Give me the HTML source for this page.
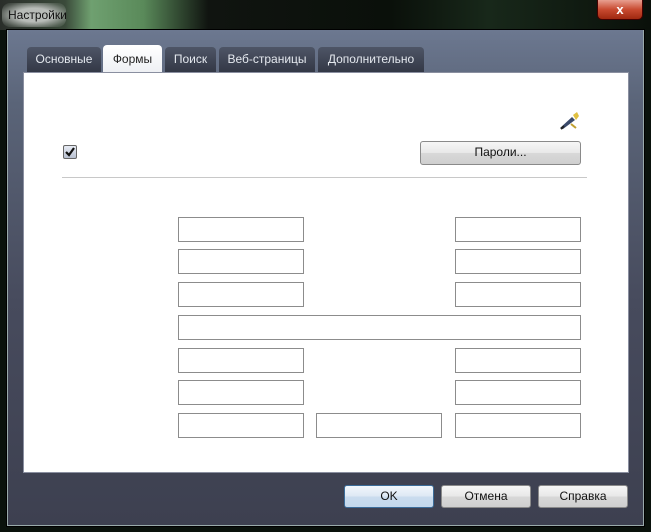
<!DOCTYPE html>
<html><head><meta charset="utf-8"><style>
*{margin:0;padding:0;box-sizing:border-box}
body{width:651px;height:532px;overflow:hidden;background:#0a120c;font-family:"Liberation Sans",sans-serif;font-size:12px;position:relative}
.a{position:absolute}
.title{left:0;top:0;width:651px;height:30px;background:linear-gradient(90deg,#2a2e2a 0,#3a4a3a 10%,#6fa070 14%,#5a8a5a 22%,#101410 32%,#0a100a 60%,#18281a 75%,#0a100a 100%)}
.frame{left:7px;top:30px;width:637px;height:496px;background:linear-gradient(#6c7890 0,#5a6478 15%,#474b5d 55%,#3d4050 100%);border:1px solid #9aa;border-top:none;box-shadow:0 0 0 1px #000}
.panel{left:23px;top:72px;width:606px;height:401px;background:#fff;border:1px solid #8a8fa0}
.tab{top:47px;height:25px;background:linear-gradient(#4e5566,#333846);color:#e4e8ee;text-align:center;line-height:25px;border-radius:4px 4px 0 0;font-size:12px}
.tab.s{background:linear-gradient(#fff,#eef0f4);color:#222;height:27px;top:45px;line-height:29px}
.f{width:126px;height:25px;border:1px solid #8c8c8c;background:#fff}
.btn{height:23px;border:1px solid #8a8a8a;border-radius:3px;background:linear-gradient(#f6f6f6 0,#e8e8e8 50%,#d8d8d8 51%,#cfcfcf 100%);text-align:center;line-height:21px;color:#111}
</style></head><body>
<div class="a title"></div>
<div class="a" style="left:2px;top:3px;width:64px;height:24px;border-radius:8px;background:radial-gradient(ellipse,#b8bcb8 40%,rgba(150,160,150,0.3) 80%,transparent)"></div>
<div class="a" style="left:8px;top:8px;color:#111;font-size:12px">Настройки</div>
<div class="a" style="left:597px;top:0;width:46px;height:20px;border:1px solid #400;border-top:none;border-radius:0 0 5px 5px;background:linear-gradient(#e8a090,#c84a30 50%,#a02810);color:#fff;text-align:center;font-weight:bold;font-size:13px;line-height:19px">x</div>
<div class="a frame"></div>
<div class="a tab" style="left:27px;width:74px">Основные</div>
<div class="a tab s" style="left:103px;width:59px">Формы</div>
<div class="a tab" style="left:165px;width:51px">Поиск</div>
<div class="a tab" style="left:219px;width:96px">Веб-страницы</div>
<div class="a tab" style="left:318px;width:106px">Дополнительно</div>
<div class="a panel"></div>
<svg class="a" style="left:558px;top:111px" width="22" height="20" viewBox="0 0 22 20"><path d="M2 17 L14 6 L17 9 L5 18 Z" fill="#3a4a6a"/><path d="M3 18 L6 15" stroke="#222" stroke-width="2"/><path d="M15 4 L19 1 L21 5 L18 9 Z" fill="#e0c040"/><path d="M13 13 L18 17" stroke="#c0a030" stroke-width="2"/></svg>
<div class="a" style="left:63px;top:145px;width:14px;height:14px;border:1px solid #666;border-radius:2px;background:linear-gradient(#e8ecf4,#b8c0d0)"></div>
<svg class="a" style="left:64px;top:146px" width="12" height="12"><path d="M2 6 L5 9 L10 2" stroke="#111" stroke-width="2.2" fill="none"/></svg>
<div class="a btn" style="left:420px;top:141px;width:161px;height:24px">Пароли...</div>
<div class="a" style="left:62px;top:177px;width:525px;height:1px;background:#c8c8c8"></div>
<div class="a f" style="left:178px;top:217px"></div><div class="a f" style="left:455px;top:217px"></div>
<div class="a f" style="left:178px;top:249px"></div><div class="a f" style="left:455px;top:249px"></div>
<div class="a f" style="left:178px;top:282px"></div><div class="a f" style="left:455px;top:282px"></div>
<div class="a f" style="left:178px;top:315px;width:403px"></div>
<div class="a f" style="left:178px;top:348px"></div><div class="a f" style="left:455px;top:348px"></div>
<div class="a f" style="left:178px;top:380px"></div><div class="a f" style="left:455px;top:380px"></div>
<div class="a f" style="left:178px;top:413px"></div><div class="a f" style="left:316px;top:413px"></div><div class="a f" style="left:455px;top:413px"></div>
<div class="a btn" style="left:344px;top:485px;width:90px;border-color:#3c6d9a;background:linear-gradient(#f2f7fc,#dde8f4 50%,#cadcee 51%,#c4d8ec)">OK</div>
<div class="a btn" style="left:441px;top:485px;width:90px">Отмена</div>
<div class="a btn" style="left:538px;top:485px;width:90px">Справка</div>
</body></html>
